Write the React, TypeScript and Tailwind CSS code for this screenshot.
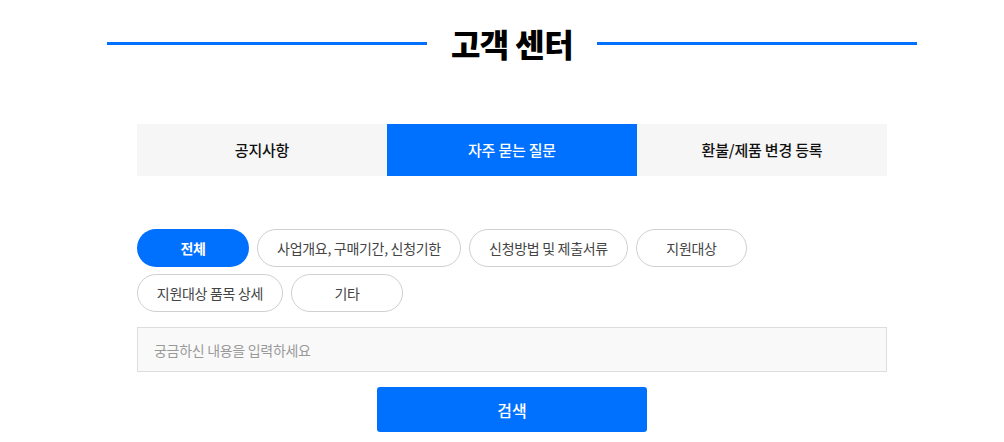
const tabs = ["공지사항", "자주 묻는 질문", "환불/제품 변경 등록"];

const categories = [
  { label: "전체", w: "w-[112px]" },
  { label: "사업개요, 구매기간, 신청기한", w: "w-[204px]" },
  { label: "신청방법 및 제출서류", w: "w-[159px]" },
  { label: "지원대상", w: "w-[111px]" },
  { label: "지원대상 품목 상세", w: "w-[146px]" },
  { label: "기타", w: "w-[112px]" },
];

export default function App() {
  const activeTab = 1;
  const activeCategory = 0;

  return (
    <div className="min-h-screen bg-white overflow-hidden font-['Noto_Sans_CJK_KR','Noto_Sans',sans-serif]">
      <div className="w-[1024px]">
        <div className="flex items-center justify-center gap-6 pt-[26px]">
          <span className="h-[3px] w-[320px] bg-[#0070ff]" />
          <h1 className="text-[32px] leading-[34px] font-black text-black tracking-[-0.6px]">
            고객 센터
          </h1>
          <span className="h-[3px] w-[320px] bg-[#0070ff]" />
        </div>

        <div className="w-[750px] mx-auto mt-[64px]">
          <div className="grid grid-cols-3 h-[52px]">
            {tabs.map((t, i) => (
              <div
                key={t}
                className={`flex items-center justify-center text-[15px] font-medium tracking-[-0.2px] ${
                  i === activeTab ? "bg-[#0070ff] text-white" : "bg-[#f6f6f6] text-[#111]"
                }`}
              >
                {t}
              </div>
            ))}
          </div>

          <div className="flex flex-wrap gap-x-2 gap-y-[7px] mt-[53px] w-[620px]">
            {categories.map((c, i) => (
              <button
                key={c.label}
                className={`${c.w} h-[38px] rounded-full text-[14px] tracking-[-0.3px] ${
                  i === activeCategory
                    ? "bg-[#0070ff] text-white font-bold"
                    : "bg-white border border-[#d0d0d0] text-[#444]"
                }`}
              >
                {c.label}
              </button>
            ))}
          </div>

          <input
            className="mt-[15px] w-full h-[45px] bg-[#f9f9f9] border border-[#dddddd] px-4 text-[14px] tracking-[-0.3px] outline-none placeholder:text-[#999]"
            placeholder="궁금하신 내용을 입력하세요"
          />

          <div className="flex justify-center mt-[15px]">
            <button className="w-[270px] h-[45px] rounded-[3px] bg-[#0070ff] text-white text-[16px] font-medium">
              검색
            </button>
          </div>
        </div>
      </div>
    </div>
  );
}
